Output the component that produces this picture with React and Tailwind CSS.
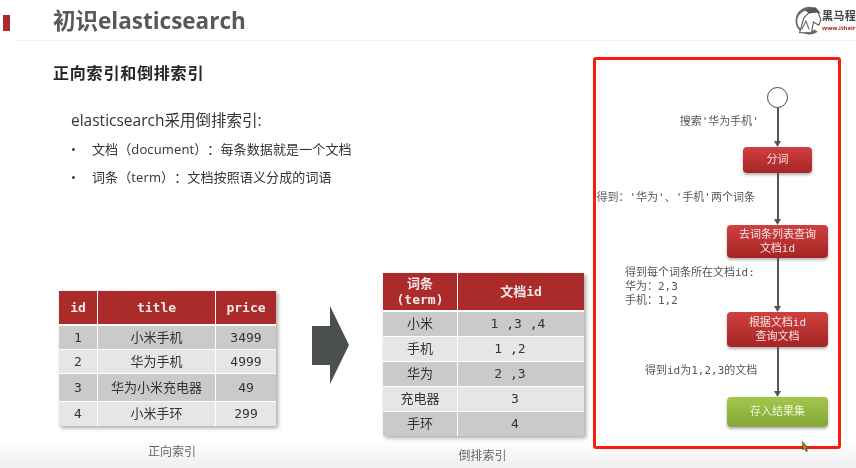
const cjk = "font-['Open_Sans','Noto_Sans_CJK_SC',sans-serif]";
const mono = "font-['DejaVu_Sans_Mono','Noto_Sans_CJK_SC',monospace]";

const forwardRows = [
  { h: "h-[23px]", bg: "bg-[#cacbc8]", cells: ["1", "小米手机", "3499"] },
  { h: "h-[23px]", bg: "bg-[#e6e6e6]", cells: ["2", "华为手机", "4999"] },
  { h: "h-[27px]", bg: "bg-[#cacbc8]", cells: ["3", "华为小米充电器", "49"] },
  { h: "h-[24px]", bg: "bg-[#e6e6e6]", cells: ["4", "小米手环", "299"] },
];

const invertedRows = [
  { h: "h-[24px]", bg: "bg-[#cacbc8]", pad: "pr-[6px]", cells: ["小米", "1 ,3 ,4"] },
  { h: "h-[24px]", bg: "bg-[#e6e6e6]", pad: "pr-[22px]", cells: ["手机", "1 ,2"] },
  { h: "h-[24px]", bg: "bg-[#cacbc8]", pad: "pr-[22px]", cells: ["华为", "2 ,3"] },
  { h: "h-[24px]", bg: "bg-[#e6e6e6]", pad: "pr-[12px]", cells: ["充电器", "3"] },
  { h: "h-[24px]", bg: "bg-[#cacbc8]", pad: "pr-[12px]", cells: ["手环", "4"] },
];

function Row({ row, widths }) {
  return (
    <div className={`flex gap-[1px] ${row.h}`}>
      {row.cells.map((cell, i) => (
        <div key={i} className={`${widths[i]} ${row.bg} ${i > 0 && row.pad ? row.pad : ""} flex items-center justify-center`}>
          {cell}
        </div>
      ))}
    </div>
  );
}

function Logo() {
  return (
    <div className="w-[65px] shrink-0 flex items-center mt-[-1px]">
      <svg width="31" height="31" viewBox="1 1 29 29" className="shrink-0">
        <path d="M24 4 A13 13 0 1 0 26 26 L23 24 A10 10 0 1 1 21 7 Z" fill="#6a6a6a" />
        <path d="M9 27 L13 13 L18 8 L26 7 L29 15 L27 20 L22 17 L20 27 Z" fill="#fff" stroke="#555" strokeWidth="1" />
        <path d="M11 24 L15 16 L18 24" fill="none" stroke="#666" strokeWidth="1" />
        <path d="M14 6 L24 3 L29 9 L25 8 L18 9 Z" fill="#555" />
      </svg>
      <div className="shrink-0 whitespace-nowrap">
        <div className="text-[11px] leading-[16px] font-bold text-[#444] tracking-[0.4px]">黑马程</div>
        <div className="text-[6px] leading-[8px] font-bold text-[#a32020]">www.itheir</div>
      </div>
    </div>
  );
}

function Connector({ h }) {
  return (
    <div className={`flex flex-col items-center ${h}`}>
      <div className="w-[2px] grow bg-[#555]" />
      <svg width="7" height="6" viewBox="0 0 7 6" className="shrink-0">
        <path d="M0 0 H7 L3.5 6 Z" fill="#555" />
      </svg>
    </div>
  );
}

function Node({ children, className }) {
  return (
    <div className={`flex items-center justify-center text-center rounded-[4px] text-[11px] leading-[14px] shadow-[0_2px_3px_rgba(0,0,0,0.3)] bg-gradient-to-b ${mono} ${className}`}>
      {children}
    </div>
  );
}

const red = "from-[#d04040] to-[#a52525] text-[#f6e6e6]";

export default function App() {
  return (
    <div className={`relative w-[856px] h-[468px] overflow-hidden flex flex-col bg-gradient-to-b from-white from-[94%] to-[#efefef] blur-[0.35px] [text-spacing-trim:space-all] ${cjk}`}>
      <header className="h-[41px] shrink-0 flex items-center">
        <div className="w-[7px] h-[16px] ml-[3px] mt-[5px] bg-[#ad2a2a]" />
        <div className="flex-1 h-full ml-[7px] border-b border-[#f0f0f0] flex items-center justify-between pl-[36px] pt-[1px]">
          <h1 className="text-[22.5px] font-bold text-[#595959] leading-none mt-[1px]">初识elasticsearch</h1>
          <Logo />
        </div>
      </header>

      <main className="flex-1 flex">
        <section className="w-[593px] shrink-0">
          <h2 className="ml-[53px] mt-[22px] text-[16px] tracking-[0.8px] leading-[20px] font-bold text-[#262626]">正向索引和倒排索引</h2>
          <p className="ml-[71px] mt-[27px] text-[15.5px] leading-[20px] text-[#333]">elasticsearch采用倒排索引:</p>
          <ul className="ml-[71px] mt-[9px] text-[13px] leading-[20px] tracking-[0.12px] text-[#333]">
            <li className="flex">
              <span className="w-[21px]">•</span>文档（document）：每条数据就是一个文档
            </li>
            <li className="flex mt-[8px]">
              <span className="w-[21px]">•</span>词条（term）：文档按照语义分成的词语
            </li>
          </ul>

          <div className="flex items-start ml-[59px] mt-[86px]">
            <div className="mt-[18px] w-[217px]">
              <div className="shadow-[2px_2px_4px_rgba(0,0,0,0.35)] bg-white">
                <div className={`flex gap-[1px] h-[33px] mb-[2px] bg-white text-[13px] font-bold text-[#f5eaea] ${mono}`}>
                  {["id", "title", "price"].map((t, i) => (
                    <div key={t} className={`${["w-[38px]", "w-[117px]", "w-[60px]"][i]} bg-[#ab2a2a] flex items-center justify-center`}>{t}</div>
                  ))}
                </div>
                <div className={`flex flex-col gap-[1px] text-[13px] text-[#333] ${mono}`}>
                  {forwardRows.map((row) => (
                    <Row key={row.cells[0]} row={row} widths={["w-[38px]", "w-[117px]", "w-[60px]"]} />
                  ))}
                </div>
              </div>
              <p className="mt-[18px] ml-[9px] text-center text-[12px] leading-[16px] text-[#666]">正向索引</p>
            </div>

            <svg width="38" height="80" viewBox="0 0 38 80" className="ml-[36px] mt-[33px] shrink-0">
              <path d="M0 20 H18 V0 L37 39 L18 78 V59 H0 Z" fill="#4b4f4e" />
            </svg>

            <div className="ml-[33px] w-[201px]">
              <div className="shadow-[2px_2px_4px_rgba(0,0,0,0.35)] bg-white">
                <div className={`flex gap-[1px] h-[37px] mb-[2px] bg-white text-[13px] leading-[16px] font-bold text-[#f5eaea] ${mono}`}>
                  <div className="w-[74px] bg-[#ab2a2a] flex items-center justify-center text-center">词条<br />(term)</div>
                  <div className="w-[126px] bg-[#ab2a2a] flex items-center justify-center">文档id</div>
                </div>
                <div className={`flex flex-col gap-[1px] text-[13px] text-[#333] ${mono}`}>
                  {invertedRows.map((row) => (
                    <Row key={row.cells[0]} row={row} widths={["w-[74px]", "w-[126px]"]} />
                  ))}
                </div>
              </div>
              <p className="mt-[12px] mr-[2px] text-center text-[12px] leading-[16px] text-[#666]">倒排索引</p>
            </div>
          </div>
        </section>

        <aside className="relative w-[248px] h-[392px] mt-[16px] border-[3px] border-[#fb1a10] rounded-[3px] overflow-hidden bg-white">
          <div className="w-[101px] ml-[131px] pt-[27px] flex flex-col items-center">
            <div className="w-[21px] h-[21px] rounded-full border border-[#444] bg-white shrink-0" />
            <Connector h="h-[39px]" />
            <Node className={`w-[69px] h-[26px] ${red}`}>分词</Node>
            <Connector h="h-[52px]" />
            <Node className={`w-[101px] h-[33px] ${red}`}>去词条列表查询<br />文档id</Node>
            <Connector h="h-[54px]" />
            <Node className={`w-[101px] h-[35px] ${red}`}>根据文档id<br />查询文档</Node>
            <Connector h="h-[50px]" />
            <Node className="w-[101px] h-[30px] from-[#a3c64a] to-[#84a838] text-[#f1f6df]">存入结果集</Node>
          </div>

          <div className={`absolute right-[79px] top-[55px] text-[11px] leading-[14px] text-[#555] whitespace-nowrap ${mono}`}>搜索'华为手机'</div>
          <div className={`absolute right-[83px] top-[131px] text-[11px] leading-[14px] text-[#555] whitespace-nowrap ${mono}`}>得到：'华为'、'手机'两个词条</div>
          <div className={`absolute left-[29px] top-[206px] text-[11px] leading-[14px] text-[#555] whitespace-nowrap ${mono}`}>
            得到每个词条所在文档id:<br />华为：2,3<br />手机：1,2
          </div>
          <div className={`absolute left-[49px] top-[304px] text-[11px] leading-[14px] text-[#555] whitespace-nowrap ${mono}`}>得到id为1,2,3的文档</div>
        </aside>
      </main>

      <svg width="7" height="11" viewBox="0 0 7 11" className="absolute left-[802px] top-[441px]">
        <path d="M0.5 0.5 V9 L2.5 7.5 L4 10.5 L5.5 10 L4.5 7 H6.5 Z" fill="#8a8a20" stroke="#333" strokeWidth="0.5" />
      </svg>
    </div>
  );
}
